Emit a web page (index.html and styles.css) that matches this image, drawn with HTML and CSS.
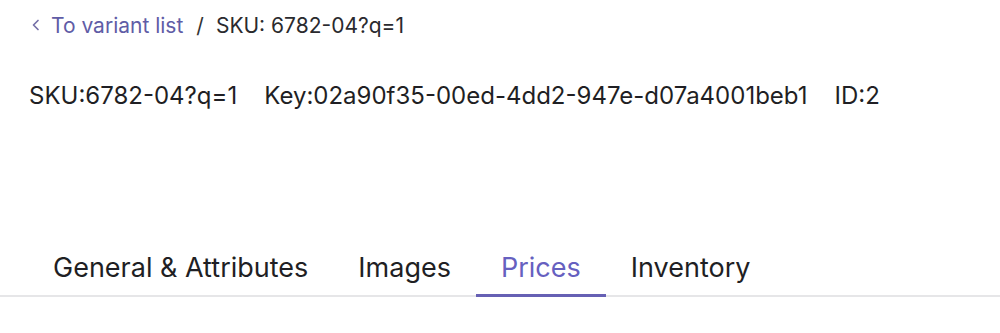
FILE: index.html
```html
<!DOCTYPE html>
<html>
<head>
    <title>Variant SKU: 6782-04?q=1</title>
    <link rel="stylesheet" href="styles.css">
</head>
<body>
    <div class="page">
        <nav class="breadcrumb">
            <a href="#" class="back">
                <svg width="10" height="14" viewBox="0 0 10 14"><path d="M7 2.5 L2.5 7 L7 11.5" fill="none" stroke="currentColor" stroke-width="1.7" stroke-linecap="round" stroke-linejoin="round"/></svg>
                To variant list
            </a>
            <span class="sep">/</span>
            <span class="current">SKU: 6782-04?q=1</span>
        </nav>
        <h1 class="title">
            <span>SKU:6782-04?q=1</span>
            <span>Key:02a90f35-00ed-4dd2-947e-d07a4001beb1</span>
            <span>ID:2</span>
        </h1>
        <div class="tabs">
            <a href="#" class="tab">General &amp; Attributes</a>
            <a href="#" class="tab">Images</a>
            <a href="#" class="tab active">Prices</a>
            <a href="#" class="tab">Inventory</a>
        </div>
    </div>
</body>
</html>
```
FILE: styles.css
```css
body {
    margin: 0;
    font-family: Inter, "Noto Sans", sans-serif;
    color: #1f1f24;
    background: #fff;
}
.breadcrumb {
    display: flex;
    align-items: center;
    height: 50px;
    padding-left: 31px;
    font-size: 21px;
}
.back {
    display: flex;
    align-items: center;
    gap: 10px;
    color: #605ca6;
    text-decoration: none;
}
.back svg {
    color: #7570a8;
}
.sep {
    margin: 0 12px 0 13px;
    color: #333;
}
.current {
    color: #2a2a2e;
}
.title {
    display: flex;
    gap: 27px;
    margin: 21px 0 0;
    padding-left: 29px;
    font-size: 24px;
    font-weight: 400;
    line-height: 50px;
}
.tabs {
    display: flex;
    margin-top: 120px;
    padding-left: 28px;
    border-bottom: 2px solid #e6e6e8;
}
.tab {
    padding: 10px 25px 10px;
    font-size: 27px;
    color: #1f1f24;
    text-decoration: none;
    border-bottom: 3px solid transparent;
    margin-bottom: -2px;
}
.tab.active {
    color: #6660c0;
    border-bottom-color: #6660b4;
}
```
